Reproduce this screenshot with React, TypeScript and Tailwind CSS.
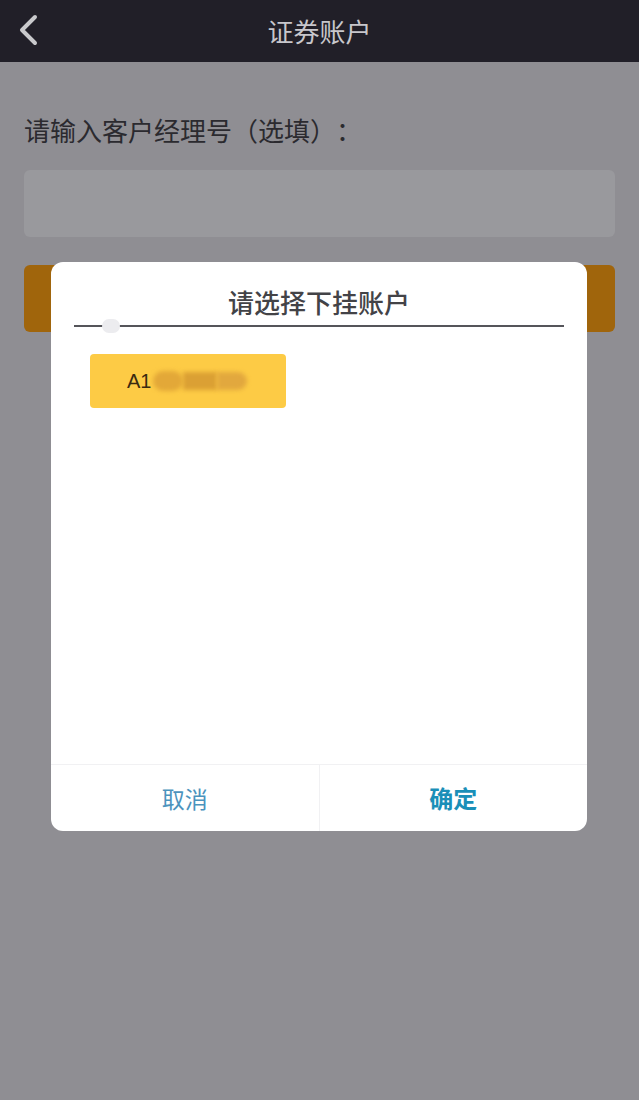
import React from "react";

const font = { fontFamily: '"Noto Sans CJK SC", "Noto Sans", sans-serif' };

export default function App() {
  return (
    <div className="relative h-[1100px] w-full overflow-hidden bg-[#8f8e93]" style={font}>
      {/* Header */}
      <div className="relative flex h-[62px] items-center justify-center bg-[#211f28]">
        <svg className="absolute left-[16px] top-[14px]" width="24" height="32" viewBox="0 0 24 32">
          <path d="M19 3 L6 16 L19 29" fill="none" stroke="#c9c9cc" strokeWidth="4" strokeLinecap="round" strokeLinejoin="round" />
        </svg>
        <span className="text-[26px] leading-none text-[#c8c7cc]">证券账户</span>
      </div>

      {/* Page content (dimmed behind modal) */}
      <div className="px-6 pt-[50px]">
        <p className="text-[26px] leading-[36px] text-[#2b2a2f] [text-spacing-trim:space-all]">请输入客户经理号（选填）：</p>
        <div className="mt-[22px] h-[67px] rounded-md bg-[#99999d]" />
        <div className="mt-[28px] h-[67px] rounded-md bg-[#a0650c]" />
      </div>

      {/* Modal */}
      <div className="absolute left-[51px] top-[262px] flex h-[569px] w-[536px] flex-col rounded-[12px] bg-white">
        <div className="px-[23px] pt-[22px]">
          <p className="text-center text-[26px] font-medium leading-[36px] text-[#434347]">请选择下挂账户</p>
          <div className="relative mt-[5px] h-[2px] bg-[#55555a]">
            <div className="absolute left-[28px] top-[-6px] h-[14px] w-[18px] rounded-full bg-[#ececef]" />
          </div>
        </div>
        <div className="flex-1 px-[39px] pt-[27px]">
          <div className="flex h-[54px] w-[196px] items-center rounded-[4px] bg-[#fdcb45] pl-[37px]">
            <span className="text-[20px] leading-none text-[#3a2a10]" style={{ fontFamily: '"Liberation Sans", Arial, sans-serif' }}>A1</span>
            <div className="ml-[2px] flex h-[20px] w-[94px] items-center">
              <div className="h-[20px] w-[30px] rounded-full bg-[#e3a838] blur-[2px]" />
              <div className="h-[18px] w-[34px] bg-[#dba034] blur-[2px]" />
              <div className="h-[18px] w-[30px] rounded-r-full bg-[#e2a83e] blur-[2px]" />
            </div>
          </div>
        </div>
        <div className="flex h-[67px] border-t border-[#f1f1f3]">
          <button className="flex flex-1 items-center justify-center border-r border-[#f1f1f3] text-[23px] text-[#4b93bd]">取消</button>
          <button className="flex flex-1 items-center justify-center text-[24px] font-bold text-[#1a8fb8]">确定</button>
        </div>
      </div>
    </div>
  );
}
